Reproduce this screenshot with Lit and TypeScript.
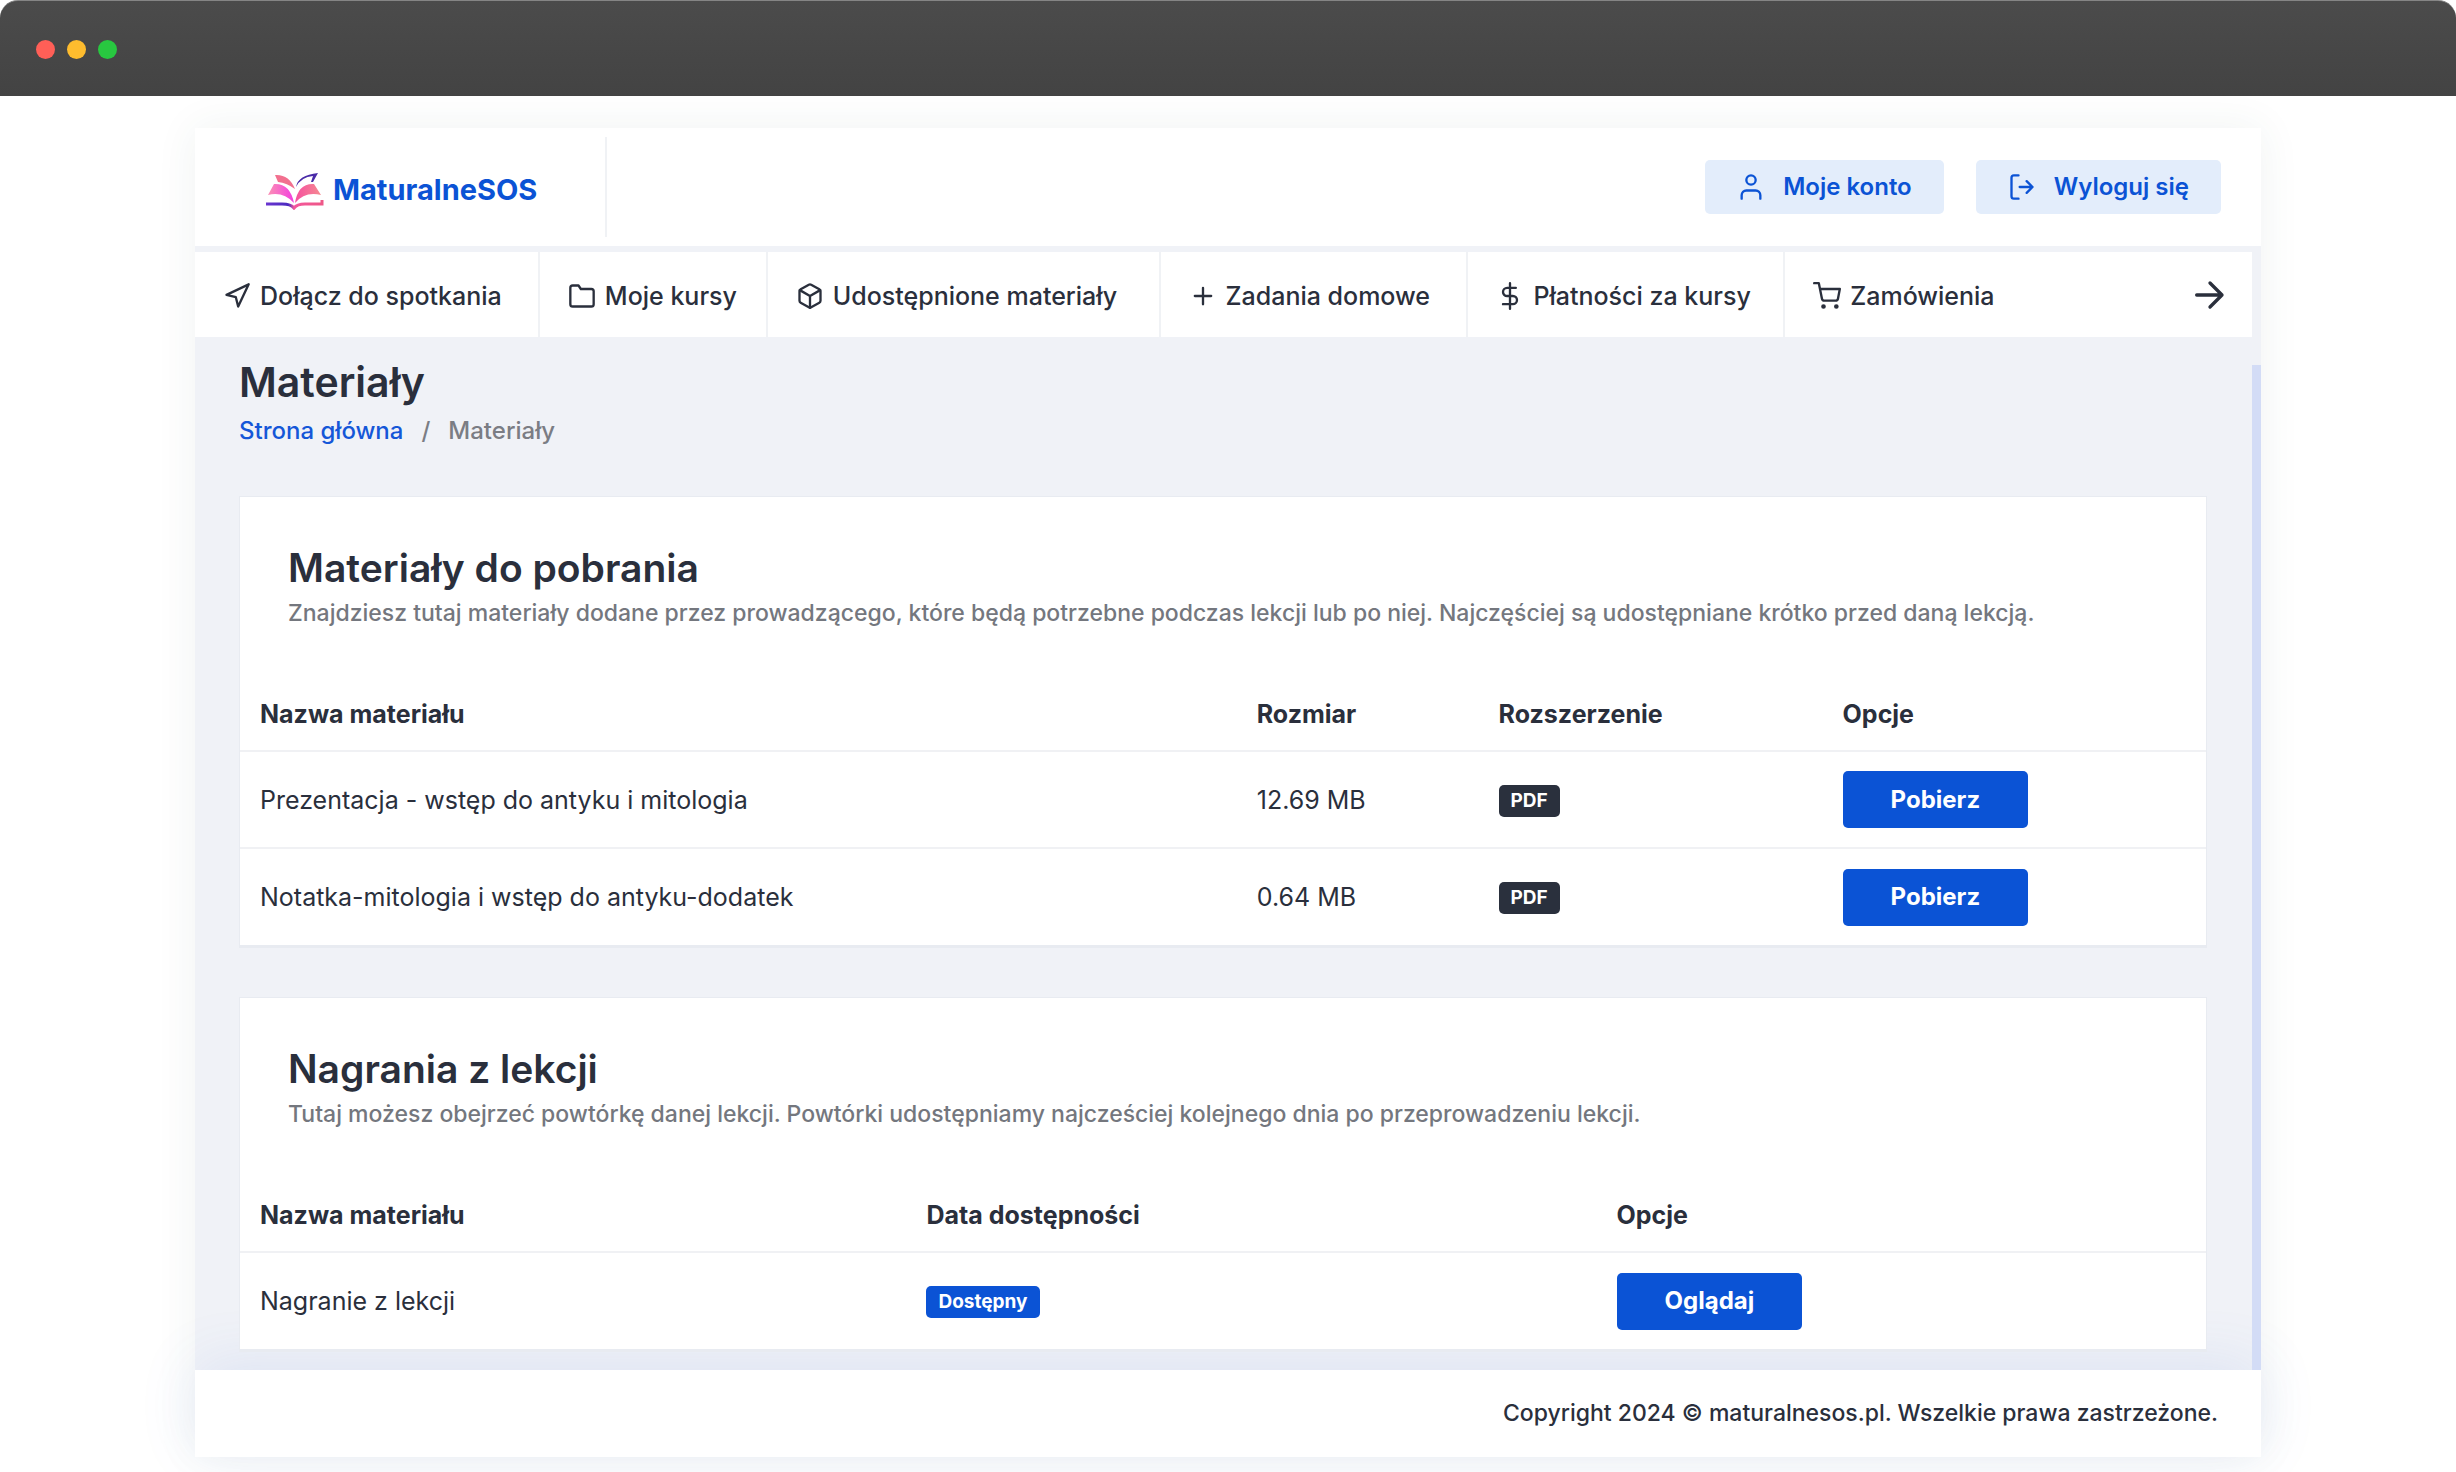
import { LitElement, html, css, svg } from "lit";
import { customElement } from "lit/decorators.js";

const icons: Record<string, unknown> = {
  send: svg`<polygon points="3 11 22 2 13 21 11 13 3 11"/>`,
  folder: svg`<path d="M22 19a2 2 0 0 1-2 2H4a2 2 0 0 1-2-2V5a2 2 0 0 1 2-2h5l2 3h9a2 2 0 0 1 2 2z"/>`,
  box: svg`<path d="M21 16V8a2 2 0 0 0-1-1.730l-7-4a2 2 0 0 0-2 0l-7 4A2 2 0 0 0 3 8v8a2 2 0 0 0 1 1.730l7 4a2 2 0 0 0 2 0l7-4A2 2 0 0 0 21 16z"/><path d="M3.270 6.960 12 12.010l8.730-5.050M12 22.080V12"/>`,
  plus: svg`<path d="M12 5v14M5 12h14"/>`,
  dollar: svg`<path d="M12 1v22M17 5H9.500a3.500 3.500 0 0 0 0 7h5a3.500 3.500 0 0 1 0 7H6"/>`,
  cart: svg`<circle cx="9" cy="21" r="1"/><circle cx="20" cy="21" r="1"/><path d="M1 1h4l2.680 13.390a2 2 0 0 0 2 1.610h9.720a2 2 0 0 0 2-1.610L23 6H6"/>`,
  arrow: svg`<path stroke-width="2.500" d="M2 12h19M12 3l9 9-9 9"/>`,
  user: svg`<path d="M20 22v-3a4 4 0 0 0-4-4H8a4 4 0 0 0-4 4v3"/><circle cx="12" cy="6" r="4"/>`,
  logout: svg`<path d="M9 22H5a2 2 0 0 1-2-2V4a2 2 0 0 1 2-2h4M16 17l5-5-5-5M21 12H10"/>`,
};
const icon = (name: string) =>
  html`<svg class="icon" viewBox="0 0 24 24" aria-hidden="true">${icons[name]}</svg>`;

const navItems = [
  ["send", "Dołącz do spotkania"],
  ["folder", "Moje kursy"],
  ["box", "Udostępnione materiały"],
  ["plus", "Zadania domowe"],
  ["dollar", "Płatności za kursy"],
  ["cart", "Zamówienia"],
];
const files = [
  ["Prezentacja - wstęp do antyku i mitologia", "12.69 MB"],
  ["Notatka-mitologia i wstęp do antyku-dodatek", "0.64 MB"],
];

@customElement("app-root")
export class AppRoot extends LitElement {
  static styles = css`
    :host { display: block; min-height: 100vh; background: #fff; color: #2a2f3c; font: 500 24px/32px Inter, "Liberation Sans", sans-serif; overflow: hidden; }
    * { box-sizing: border-box; }
    a { color: inherit; text-decoration: none; }
    h1, h2, p { margin: 0; }
    .chrome { height: 96px; padding: 2px 36px 0; display: flex; align-items: center; gap: 12px; border-radius: 18px 18px 0 0; background: linear-gradient(#4b4b4b, #434343); border-top: 1px solid #858585; }
    .dot { width: 19px; height: 19px; border-radius: 50%; background: #ff5f57; }
    .amber { background: #febc2e; }
    .green { background: #28c840; }
    .shell { margin: 32px 195px 16px; background: #f0f2f7; box-shadow: 0 0 40px rgba(40, 80, 70, .07); }
    .icon { width: 28px; height: 28px; flex: none; fill: none; stroke: currentColor; stroke-width: 2; stroke-linecap: round; stroke-linejoin: round; }
    .top { display: flex; justify-content: space-between; background: #fff; height: 118px; }
    .brand { display: flex; align-items: center; gap: 8px; width: 412px; margin: 9px 0; padding: 6px 0 0 68px; border-right: 2px solid #f0f2f5; color: #0b53d5; font-size: 29px; font-weight: 700; }
    .book { width: 62px; height: 40px; }
    .account { display: flex; align-items: center; gap: 32px; padding-right: 40px; }
    .soft { display: flex; align-items: center; justify-content: center; gap: 18px; height: 54px; padding: 0 32px; border: 0; border-radius: 5px; background: #e3edfb; color: #0b53d5; font: inherit; font-weight: 600; }
    .nav { display: grid; grid-template-columns: 345fr 228fr 393fr 308fr 317fr 467fr; margin: 6px 9px 0 0; height: 85px; background: #fff; }
    .item { display: flex; align-items: center; justify-content: space-between; border-right: 2px solid #f0f2f5; padding: 0 26px 0 28px; white-space: nowrap; }
    .item:last-child { border: 0; }
    .link { display: flex; align-items: center; gap: 9px; padding-top: 3px; font-size: 25px; }
    .more { display: flex; padding: 0; border: 0; background: none; color: inherit; }
    .more .icon { width: 32px; height: 32px; }
    .body { display: grid; grid-template-columns: 1fr 9px; }
    .main { padding: 21px 45px 18px 44px; }
    .main h1 { font-size: 41px; line-height: 48px; font-weight: 600; }
    .crumbs { display: flex; gap: 18px; margin-top: 9px; color: #7b7d84; }
    .crumbs a { color: #1557d8; }
    .thumb { margin-top: 28px; background: #d3dcf6; }
    .card { margin-top: 49px; background: #fff; border: 1px solid #e8ebf1; border-bottom-width: 3px; }
    .head { padding: 46px 48px 44px; }
    .card h2 { font-size: 39px; line-height: 50px; font-weight: 600; }
    .head p { font-size: 23px; line-height: 40px; color: #74777e; }
    table { width: 100%; border-collapse: collapse; table-layout: fixed; }
    th, td { padding: 0 0 0 20px; text-align: left; font-size: 25px; }
    th { height: 74px; font-weight: 700; }
    td { height: 97px; border-top: 2px solid #f0f1f4; font-weight: 400; }
    .badge { display: inline-block; padding: 0 12px; border-radius: 5px; background: #2a303d; color: #fff; font-size: 19px; line-height: 32px; font-weight: 700; vertical-align: middle; }
    .blue { background: #0b53d5; }
    .action { height: 57px; padding: 0 48px; border: 0; border-radius: 5px; background: #0b53d5; color: #fff; font: inherit; font-size: 24px; font-weight: 700; }
    .w-name { width: 50.700%; } .w-size { width: 12.300%; } .w-ext { width: 17.500%; }
    .w-rec { width: 33.900%; } .w-date { width: 35.100%; }
    .foot { display: flex; align-items: center; justify-content: flex-end; height: 87px; padding: 0 43px 2px; background: #fff; font-size: 23px; box-shadow: 0 -8px 60px rgba(70, 110, 220, .1); }
  `;

  render() {
    return html`
      <div class="chrome"><span class="dot"></span><span class="dot amber"></span><span class="dot green"></span></div>
      <div class="shell">
        <header class="top">
          <a class="brand" href="#">
            <svg class="book" viewBox="0 0 62 40" aria-hidden="true">
              <defs>
                <linearGradient id="l"><stop stop-color="#fb8fb4"/><stop offset="1" stop-color="#f33ee0"/></linearGradient>
                <linearGradient id="r"><stop stop-color="#f64fa0"/><stop offset="1" stop-color="#f58a91"/></linearGradient>
                <linearGradient id="b"><stop stop-color="#6a35d0"/><stop offset=".4" stop-color="#4b2bc0"/><stop offset=".5" stop-color="#f4589c"/><stop offset="1" stop-color="#ee5788"/></linearGradient>
              </defs>
              <path fill="#f2708f" d="M12 5q14-1 20 14-8-6-17-7z"/>
              <path fill="#4a2ba8" d="M33 17q2-12 22-14l-5 9h-2l2-6q-12 1-17 11z"/>
              <path fill="url(#l)" d="M11 14q16-1 20 19-11-12-26-8z"/>
              <path fill="url(#r)" d="M51 14Q35 13 32 33q10-12 26-8z"/>
              <path fill="none" stroke="url(#b)" stroke-width="3" d="M3 34h16q9 0 12 4 3-4 11-4h17v-4"/>
            </svg>
            <span>MaturalneSOS</span>
          </a>
          <div class="account">
            <button class="soft">${icon("user")}Moje konto</button>
            <button class="soft">${icon("logout")}Wyloguj się</button>
          </div>
        </header>
        <nav class="nav">
          ${navItems.map(([name, label], i) => html`<div class="item">
            <a class="link" href="#">${icon(name)}${label}</a>
            ${i === 5 ? html`<button class="more" aria-label="Dalej">${icon("arrow")}</button>` : ""}
          </div>`)}
        </nav>
        <div class="body">
          <main class="main">
            <h1>Materiały</h1>
            <div class="crumbs"><a href="#">Strona główna</a><span>/</span><span>Materiały</span></div>
            <section class="card">
              <div class="head"><h2>Materiały do pobrania</h2>
                <p>Znajdziesz tutaj materiały dodane przez prowadzącego, które będą potrzebne podczas lekcji lub po niej. Najczęściej są udostępniane krótko przed daną lekcją.</p></div>
              <table>
                <thead><tr><th class="w-name">Nazwa materiału</th><th class="w-size">Rozmiar</th><th class="w-ext">Rozszerzenie</th><th>Opcje</th></tr></thead>
                <tbody>${files.map(([name, size]) => html`<tr><td>${name}</td><td>${size}</td><td><span class="badge">PDF</span></td><td><button class="action">Pobierz</button></td></tr>`)}</tbody>
              </table>
            </section>
            <section class="card">
              <div class="head"><h2>Nagrania z lekcji</h2>
                <p>Tutaj możesz obejrzeć powtórkę danej lekcji. Powtórki udostępniamy najcześciej kolejnego dnia po przeprowadzeniu lekcji.</p></div>
              <table>
                <thead><tr><th class="w-rec">Nazwa materiału</th><th class="w-date">Data dostępności</th><th>Opcje</th></tr></thead>
                <tbody><tr><td>Nagranie z lekcji</td><td><span class="badge blue">Dostępny</span></td><td><button class="action">Oglądaj</button></td></tr></tbody>
              </table>
            </section>
          </main>
          <div class="thumb"></div>
        </div>
        <footer class="foot">Copyright 2024 © maturalnesos.pl. Wszelkie prawa zastrzeżone.</footer>
      </div>`;
  }
}
